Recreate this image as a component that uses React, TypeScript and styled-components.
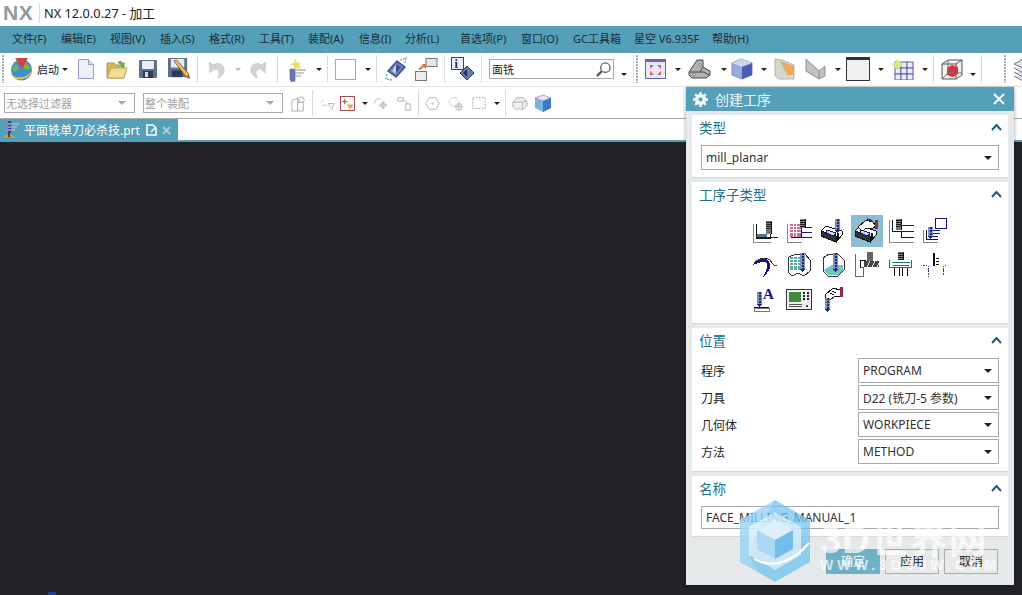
import styled, { createGlobalStyle } from "styled-components";
import type { ReactNode } from "react";

const FONT = `"Noto Sans", "Noto Sans CJK SC", sans-serif`;
const TEAL = "#559fb8";

const Global = createGlobalStyle`
  html, body { margin: 0; padding: 0; background: #212326; }
  body { font-family: ${FONT}; color: #222; }
  * { box-sizing: border-box; }
`;

const Page = styled.div`
  position: relative;
  display: flex;
  flex-direction: column;
  width: 1022px;
  height: 595px;
  overflow: hidden;
  background: #212326;
`;

const TitleBar = styled.div`
  display: flex;
  align-items: center;
  height: 26px;
  background: #fff;
`;

const Logo = styled.span`
  width: 39px;
  padding-left: 3px;
  font: bold 21px/26px "Liberation Sans", sans-serif;
  color: #8f9aa5;
  letter-spacing: 0.5px;
`;

const TitleText = styled.span`
  padding-left: 4px;
  font-size: 12.8px;
  line-height: 20px;
  border-left: 1px solid #d8d8d8;
  color: #222;
`;

const MenuBar = styled.div`
  display: flex;
  align-items: center;
  height: 27px;
  padding: 0 0 3px 12px;
  background: ${TEAL};
`;

const MenuItem = styled.span<{ $w: number }>`
  width: ${(p) => p.$w}px;
  font-size: 11px;
  white-space: nowrap;
  color: #1c2b33;
`;

const Toolbar = styled.div<{ $first?: boolean }>`
  display: flex;
  align-items: center;
  flex-shrink: 0;
  height: ${(p) => (p.$first ? 34 : 31)}px;
  padding: ${(p) => (p.$first ? "0 0 1px" : "1px 0 0")};
  background: #fff;
  border-bottom: ${(p) => (p.$first ? "1px solid #e2e2e2" : "0")};
  overflow: hidden;
`;

const Grip = styled.span<{ $ml: number }>`
  flex-shrink: 0;
  align-self: stretch;
  width: 2px;
  margin: 2px 0 2px ${(p) => p.$ml}px;
  background: repeating-linear-gradient(#aaa 0 2px, transparent 2px 3px);
`;

const Sep = styled.span<{ $ml: number }>`
  flex-shrink: 0;
  align-self: stretch;
  width: 1px;
  margin: 2px 0 2px ${(p) => p.$ml}px;
  background: #dcdcdc;
`;

const Caret = styled.span<{ $ml: number; $low?: boolean; $dim?: boolean }>`
  flex-shrink: 0;
  width: 0;
  height: 0;
  margin-left: ${(p) => p.$ml}px;
  margin-top: ${(p) => (p.$low ? 10 : 0)}px;
  border-left: 3px solid transparent;
  border-right: 3px solid transparent;
  border-top: 3px solid ${(p) => (p.$dim ? "#bbb" : "#222")};
`;

const Slot = styled.span<{ $ml: number; $w: number }>`
  display: flex;
  flex-shrink: 0;
  width: ${(p) => p.$w}px;
  margin-left: ${(p) => p.$ml}px;
  svg { display: block; width: 100%; height: auto; }
`;

const StartLabel = styled.span`
  flex-shrink: 0;
  width: 25px;
  margin-left: 4px;
  font-size: 11px;
`;

const Blank = styled.span<{ $ml: number }>`
  flex-shrink: 0;
  width: 21px;
  height: 21px;
  margin-left: ${(p) => p.$ml}px;
  border: 1px solid #a8a8a8;
  background: #fff;
`;

const SearchBox = styled.div<{ $ml: number }>`
  display: flex;
  align-items: center;
  justify-content: space-between;
  flex-shrink: 0;
  width: 125px;
  height: 20px;
  margin-left: ${(p) => p.$ml}px;
  padding: 0 2px;
  border: 1px solid #a8a8a8;
  font-size: 11px;
`;

const Filter = styled.div<{ $ml: number; $w: number }>`
  display: flex;
  align-items: center;
  justify-content: space-between;
  flex-shrink: 0;
  width: ${(p) => p.$w}px;
  height: 20px;
  margin-left: ${(p) => p.$ml}px;
  padding: 0 8px 0 1px;
  border: 1px solid #aaa;
  font-size: 11px;
  color: #a0a0a0;
`;

const FilterCaret = styled.span`
  width: 0;
  height: 0;
  border-left: 4px solid transparent;
  border-right: 4px solid transparent;
  border-top: 4px solid #a8a8a8;
`;

const TabRow = styled.div`
  display: flex;
  flex-shrink: 0;
  height: 24px;
  background: #fff;
  border-top: 1px solid #a9a9a9;
  border-bottom: 2px solid ${TEAL};
`;

const Tab = styled.div`
  display: flex;
  align-items: center;
  width: 178px;
  height: 22px;
  padding-left: 4px;
  background: ${TEAL};
  color: #fff;
  font-size: 12px;
`;

const TabName = styled.span`
  margin-left: 4px;
  white-space: nowrap;
`;

const Workspace = styled.div`
  flex: 1;
  background: #212326;
`;

const Dialog = styled.div`
  position: absolute;
  left: 686px;
  top: 87px;
  display: flex;
  flex-direction: column;
  width: 328px;
  height: 498px;
  background: #e6e9ea;
  box-shadow: 0 1px 4px rgba(0, 0, 0, 0.4);
`;

const DialogHeader = styled.div`
  display: flex;
  align-items: center;
  flex-shrink: 0;
  height: 24px;
  padding: 0 9px 0 7px;
  background: ${TEAL};
  color: #f2f8fa;
  font-size: 14px;
`;

const DialogTitle = styled.span`
  flex: 1;
  margin-left: 7px;
`;

const DialogBody = styled.div`
  display: flex;
  flex-direction: column;
  gap: 4px;
  padding: 4px 6px 0;
`;

const Panel = styled.section<{ $h: number }>`
  height: ${(p) => p.$h}px;
  padding: 0 9px;
  background: #fff;
  border-bottom: 1px solid #d4d6d7;
`;

const PanelHead = styled.div`
  display: flex;
  align-items: center;
  justify-content: space-between;
  height: 26px;
  margin: 0 -3px 4px -2px;
  padding-bottom: 2px;
  font-size: 13.5px;
  color: #23708a;
`;

const Select = styled.div<{ $w?: number }>`
  display: flex;
  align-items: center;
  justify-content: space-between;
  width: ${(p) => (p.$w ? `${p.$w}px` : "100%")};
  height: 25px;
  padding: 0 6px 0 4px;
  border: 1px solid #a8a8a8;
  font-size: 12px;
  color: #333;
  background: #fff;
`;

const SelectCaret = styled.span`
  width: 0;
  height: 0;
  border-left: 4px solid transparent;
  border-right: 4px solid transparent;
  border-top: 4px solid #222;
`;

const OpGrid = styled.div`
  display: grid;
  grid-template-columns: repeat(6, 32px);
  grid-auto-rows: 32px;
  gap: 2px;
  margin: 7px 0 0 48px;
`;

const OpCell = styled.div<{ $active?: boolean }>`
  display: flex;
  align-items: center;
  justify-content: center;
  background: ${(p) => (p.$active ? "#8dbdd0" : "transparent")};
  svg { display: block; width: 26px; height: 26px; shape-rendering: crispEdges; }
`;

const FieldList = styled.div`
  display: flex;
  flex-direction: column;
  gap: 2px;
`;

const FieldRow = styled.div`
  display: flex;
  align-items: center;
  justify-content: space-between;
  font-size: 12px;
  color: #222;
`;

const NameInput = styled.div`
  height: 23px;
  padding-left: 4px;
  border: 1px solid #a8a8a8;
  font-size: 12px;
  line-height: 21px;
  color: #333;
`;

const Footer = styled.div`
  display: flex;
  justify-content: flex-end;
  gap: 5px;
  padding: 12px 16px 0 0;
`;

const Btn = styled.div<{ $primary?: boolean }>`
  width: 54px;
  height: 25px;
  font-size: 12px;
  line-height: 23px;
  text-align: center;
  border: 1px solid ${(p) => (p.$primary ? "#6fb0c8" : "#acacac")};
  background: ${(p) => (p.$primary ? "#6fb0c8" : "#e8e9e9")};
  color: ${(p) => (p.$primary ? "#fff" : "#222")};
`;

const Watermark = styled.div`
  position: absolute;
  left: 738px;
  top: 499px;
  display: flex;
  pointer-events: none;
`;

const MarkText = styled.div`
  display: flex;
  flex-direction: column;
  margin: 26px 0 0 8px;
  white-space: nowrap;
  color: #fff;
  opacity: 0.7;
`;

const MarkTitle = styled.span`
  font: bold 38px/30px "Liberation Sans", "Noto Sans CJK SC", sans-serif;
  letter-spacing: 1px;
`;

const MarkUrl = styled.span`
  margin-top: 1px;
  font: bold 14px/18px "Liberation Sans", sans-serif;
  letter-spacing: 4.1px;
`;

const Speck = styled.span`
  position: absolute;
  left: 48px;
  bottom: 0;
  width: 8px;
  height: 3px;
  background: #2a45b8;
  opacity: 0.75;
`;

const S = ({ w, h, children }: { w: number; h: number; children: ReactNode }) => (
  <svg viewBox={`0 0 ${w} ${h}`} xmlns="http://www.w3.org/2000/svg">{children}</svg>
);

const Globe = () => (
  <S w={23} h={25}>
    <circle cx="11.5" cy="13" r="10.5" fill="#3f8fd0" />
    <path d="M3 9c4-3 6 0 5 3s-4 3-5 1zM12 6c4-1 7 2 9 6-3 2-7 0-8-2z" fill="#7db04a" />
    <path d="M1 17c5 5 15 5 22-4-3 10-18 13-22 4z" fill="#e3c23c" />
    <path d="M5 1h13l-6 11z" fill="#c9473f" />
  </S>
);
const Doc = () => (
  <S w={16} h={20}>
    <path d="M.5.5h10l5 5v14H.5z" fill="#eeeefa" stroke="#9a9ad0" />
    <path d="M10.5.5v5h5" fill="#dcdcf2" stroke="#9a9ad0" />
  </S>
);
const Folder = () => (
  <S w={22} h={21}>
    <path d="M1 4h7l2 2h8v13H1z" fill="#d9b85a" stroke="#b0924a" />
    <path d="M1 19l4-10h16l-3 10z" fill="#f3dd93" stroke="#bfa45a" />
    <path d="M11 4c3-3 5-2 6 0l2-1-1 6-5-2 2-1c-1-1-2-2-4-2z" fill="#6cab4a" />
  </S>
);
const Floppy = () => (
  <S w={18} h={18}>
    <rect width="18" height="18" rx="1" fill="#5d6f8e" />
    <rect x="3" y="1" width="12" height="8" fill="#e9edf3" />
    <rect x="4" y="11" width="10" height="7" fill="#2f3b50" />
    <rect x="6" y="12" width="3" height="5" fill="#cfd6e0" />
  </S>
);
const SaveAs = () => (
  <S w={23} h={23}>
    <rect width="20" height="20" fill="#5d6f8e" />
    <rect x="3" y="1" width="14" height="9" fill="#e9edf3" />
    <rect x="4" y="13" width="11" height="7" fill="#2f3b50" />
    <path d="M6 3l3-1 13 15-3 3z" fill="#e7c13f" stroke="#333" strokeWidth=".6" />
    <path d="M19 20l3-3 1 5z" fill="#d23f3f" />
  </S>
);
const Undo = ({ flip }: { flip?: boolean }) => (
  <S w={18} h={20}>
    <g transform={flip ? "matrix(-1 0 0 1 18 0)" : undefined}>
      <path d="M2 4l1 10 3-3c4-2 6 0 6 3 0 2-1 4-2 5 5-1 8-5 7-10-1-4-6-6-11-3L3 3z" fill="#d2d3d4" stroke="#bcbcbc" strokeWidth=".5" />
    </g>
  </S>
);
const Wand = () => (
  <S w={20} h={25}>
    <path d="M3 12h5v12l-3 1-2-2z" fill="#6b78b8" stroke="#44508f" strokeWidth=".5" />
    <path d="M8 13h11M8 16h9M8 19h6" stroke="#8a8f9e" />
    <path d="M8 1l2 5 4-1-2 4 3 3-5-1-3 2 0-4-4-2 4-1z" fill="#e8e06a" />
  </S>
);
const Rotate3D = () => (
  <S w={24} h={24}>
    <path d="M13 4l8 6-9 10-8-6z" fill="#6d7db8" stroke="#3f4e93" strokeWidth="1.4" />
    <path d="M12 7l5 3-5 7-4-3z" fill="#c4d2ee" />
    <path d="M12 7l5 3-5 7z" fill="#3f4e93" />
    <path d="M16 3l6-2-1 5M8 23l-6-1 1-6" stroke="#7aa0c8" strokeWidth="1.3" strokeDasharray="2 1" fill="none" />
  </S>
);
const TwoSquares = () => (
  <S w={23} h={23}>
    <rect x="11" y=".5" width="11" height="8" fill="#e6e6e6" stroke="#777" />
    <rect x=".5" y="13.5" width="11" height="9" fill="#ececec" stroke="#777" />
    <path d="M3 11l5-4-2-1h5v5l-2-2-4 3z" fill="#d9782f" />
  </S>
);
const InfoIcon = () => (
  <S w={24} h={24}>
    <rect x=".5" y=".5" width="12" height="12" fill="#eceefa" stroke="#3d3d86" />
    <text x="3.5" y="10.5" fontFamily="Liberation Serif" fontWeight="700" fontSize="12" fill="#23235e">i</text>
    <path d="M16 9l7 7-7 7-7-7z" fill="#6c7ca8" stroke="#2a3467" />
    <path d="M16 12v8l-4-4z" fill="#27315f" />
  </S>
);
const Magnifier = () => (
  <S w={16} h={16}>
    <circle cx="10" cy="6" r="5" fill="#fff" stroke="#555" strokeWidth="1.3" />
    <path d="M6 10l-5 5" stroke="#555" strokeWidth="2.4" />
  </S>
);
const ZoomFit = () => (
  <S w={21} h={20}>
    <rect width="21" height="20" fill="#5b68b5" />
    <rect x="1" y="3" width="19" height="16" fill="#e7e8fa" />
    <path d="M5 6h4l-4 4zM16 6v4l-4-4zM5 16v-4l4 4zM16 16h-4l4-4z" fill="#d0694f" />
  </S>
);
const Bracket = () => (
  <S w={23} h={20}>
    <path d="M1 13L9 1h6v7l7 4v4l-4 3H4l-3-3z" fill="#b1b3b3" stroke="#444" />
    <path d="M2 13h14l5 3M15 8l-3 5" stroke="#444" fill="none" />
    <circle cx="6" cy="15.5" r="1.2" fill="#fff" stroke="#333" strokeWidth=".5" />
    <circle cx="12" cy="6" r="1.2" fill="#fff" stroke="#333" strokeWidth=".5" />
  </S>
);
const BlueBox = () => (
  <S w={22} h={22}>
    <path d="M1 5l9-4 11 4v12l-10 4-10-4z" fill="#95a9dc" stroke="#7a8ccc" />
    <path d="M1 5l10 4 10-4-11-4z" fill="#c9d6f2" />
    <path d="M11 9l10-4v12l-10 4z" fill="#4c5eaf" />
  </S>
);
const OrangeSheet = () => (
  <S w={21} h={22}>
    <path d="M1 1l7 1 12 5v14H5L1 18z" fill="#d5d5d2" stroke="#b5b5b0" />
    <path d="M6 3l14 5v9h-7z" fill="#e9ab62" />
  </S>
);
const GraySheet = () => (
  <S w={21} h={22}>
    <path d="M1 1l13 12 6-5v10l-6 3-13-8z" fill="#c0c1c1" stroke="#8f8f8f" />
    <path d="M14 13v8" stroke="#8f8f8f" />
  </S>
);
const WindowIcon = () => (
  <S w={24} h={24}>
    <rect x=".5" y=".5" width="23" height="23" fill="#efefef" stroke="#333" />
    <rect width="24" height="3" fill="#333" />
  </S>
);
const GridStar = () => (
  <S w={23} h={21}>
    <g fill="#eeeefb" stroke="#5e5ea8">
      <rect x="4" y="3" width="6" height="6" />
      <rect x="10" y="3" width="6" height="6" />
      <rect x="16" y="3" width="6" height="6" />
      <rect x="4" y="9" width="6" height="6" />
      <rect x="10" y="9" width="6" height="6" />
      <rect x="16" y="9" width="6" height="6" />
      <rect x="4" y="15" width="6" height="6" />
      <rect x="10" y="15" width="6" height="6" />
      <rect x="16" y="15" width="6" height="6" />
    </g>
    <path d="M6 0l2 3 3-1-1 3 3 2-4 1-1 4-2-3-4 1 2-3-4-2 4-1z" fill="#dfe47c" />
  </S>
);
const RedCube = () => (
  <S w={22} h={21}>
    <path d="M1 5L7 1h14v15l-6 4H1zM1 5h14v15M15 5l6-4" fill="#f0f0f0" stroke="#555" />
    <path d="M6 9l5-3 6 2v7l-5 3-6-2z" fill="#d8333f" />
    <path d="M1 20l6-6M7 1v13h14" stroke="#777" fill="none" />
  </S>
);
const Layers = () => (
  <S w={14} h={24}>
    <path d="M1 7l9-5 8 5-8 4zM1 11l9 5 8-5M1 15l9 5 8-5M1 19l9 5 8-5" fill="#dfe2ee" stroke="#777" />
  </S>
);

const Dim = ({ children }: { children: ReactNode }) => (
  <S w={18} h={18}><g fill="none" stroke="#adadad" strokeWidth="1">{children}</g></S>
);

const SelFilter = () => (
  <S w={16} h={16}>
    <rect x=".5" y=".5" width="15" height="15" fill="#fff" stroke="#a33d4f" />
    <path d="M5 3v6M2 6h6" stroke="#a0453a" />
    <path d="M7 9h7l-3 5z" fill="#e2a53c" />
  </S>
);

const TabFile = () => (
  <S w={11} h={12}>
    <path d="M1 1h6l3 3v7H1z" fill="none" stroke="#fff" strokeWidth="1.6" />
    <path d="M5 8l4-4" stroke="#fff" strokeWidth="1.5" />
  </S>
);

const TabDrill = () => (
  <S w={16} h={18}>
    <path d="M4 0h3v12H4z" fill="#3a3a9a" />
    <path d="M4 3h3M4 6h3M4 9h3" stroke="#e8e8f0" />
    <path d="M8 3h7M8 6h5M8 9h3" stroke="#c8d7df" />
    <path d="M0 16c4-2 7-2 10 0" stroke="#d0a63a" strokeWidth="2" fill="none" />
    <path d="M5 12v4" stroke="#7c2d3a" strokeWidth="2" />
  </S>
);

const Gear = () => (
  <svg width="15" height="15" viewBox="0 0 14 14">
    <circle cx="7" cy="7" r="3.6" fill="none" stroke="#f2f8fa" strokeWidth="3.4" />
    <path d="M7 0v3M7 11v3M0 7h3M11 7h3M2 2l2 2M10 10l2 2M12 2l-2 2M4 10l-2 2" stroke="#f2f8fa" strokeWidth="2.2" />
  </svg>
);

const CloseX = () => (
  <svg width="12" height="12" viewBox="0 0 12 12">
    <path d="M1 1l10 10M11 1L1 11" stroke="#fff" strokeWidth="1.8" />
  </svg>
);

const Chevron = () => (
  <svg width="11" height="8" viewBox="0 0 11 8">
    <path d="M1 7l4.5-5L10 7" fill="none" stroke="#1d5f78" strokeWidth="2" />
  </svg>
);

const NAVY = "#14148c";

const Spindle = ({ x, y, h = 10 }: { x: number; y: number; h?: number }) => (
  <g>
    <rect x={x} y={y} width="6" height={h} fill="#77797c" />
    <path d={`M${x} ${y + 1.5}h6M${x} ${y + 3.5}h6M${x} ${y + 5.5}h6M${x} ${y + 7.5}h6`} stroke="#222" />
    <path d={`M${x + 5.5} ${y}v${h}`} stroke="#111" />
  </g>
);

const BlueSpindle = ({ x, y, h = 12 }: { x: number; y: number; h?: number }) => (
  <g>
    <rect x={x} y={y} width="5" height={h} fill="#7d8fb8" />
    <path d={`M${x + 2.5} ${y}v${h}`} stroke="#1b2a7a" strokeWidth="2" strokeDasharray="2 1" />
    <path d={`M${x} ${y + h}l2.5 3 2.5-3`} fill="#1b2a7a" />
  </g>
);

const Box3D = () => (
  <g>
    <path d="M1 13l5-5 16 5v4l-6 7L1 18z" fill="#fff" stroke="#111" />
    <path d="M1 13l15 5v6L1 18z" fill="#333" stroke="#111" />
    <path d="M7 12l9 3-2 3-8-3z" fill="#cfd8ef" stroke={NAVY} />
    <path d="M18 15v7" stroke="#111" strokeWidth="2" />
  </g>
);

const opIcons: ReactNode[] = [
  <S w={26} h={26} key="0"><path d="M1.5 6v18h17" fill="none" stroke="#888" /><path d="M4.5 6v14.5h14V6" fill="none" stroke="#111" strokeWidth="1.5" /><rect x="5" y="16" width="10" height="3" fill="#4c7a8c" /><path d="M4 19.5h22" stroke={NAVY} strokeWidth="1.4" /><Spindle x={14} y={3} h={13} /></S>,
  <S w={26} h={26} key="1"><path d="M1.5 6v18h14" fill="none" stroke="#888" /><path d="M4 6h11v13H4z" fill="#cf6f98" /><path d="M4 8.5h11M4 11.5h11M4 14.5h11M7.5 6v13M10.5 6v13" stroke="#fff" /><path d="M4.5 19.5h11V10" fill="none" stroke="#111" /><path d="M15 9.5h11M15 14.5h11M15 19.5h11" stroke={NAVY} /><Spindle x={14} y={1} h={9} /></S>,
  <S w={26} h={26} key="2"><Box3D /><BlueSpindle x={15} y={1} h={11} /></S>,
  <S w={26} h={26} key="3"><Box3D /><path d="M4 9l8-7 7 2 3 4-4 3-5-1-5 3z" fill="#fff" stroke="#111" /><rect x="21" y="2" width="3" height="9" fill="#8c2a50" /><path d="M13 1l5 2" stroke="#333" strokeWidth="2" /></S>,
  <S w={26} h={26} key="4"><path d="M1.5 2v22h24" fill="none" stroke="#888" /><path d="M4.5 2v11.5h9v6h12" fill="none" stroke="#111" /><path d="M13 7.5h13M13 13.5h13" stroke={NAVY} /><Spindle x={8} y={1} h={11} /></S>,
  <S w={26} h={26} key="5"><path d="M1.5 12v12h14" fill="none" stroke="#888" /><path d="M4.5 12v9.5h11" fill="none" stroke="#111" /><path d="M11 12.5h7M11 15.5h7M11 18.5h5" stroke={NAVY} /><BlueSpindle x={6} y={9} h={9} /><rect x="13.5" y=".5" width="11" height="10" fill="#fff" stroke={NAVY} /></S>,
  <S w={26} h={26} key="6"><path d="M2 11c7-6 12-6 16-3 2 3 3 6 7 6" fill="none" stroke="#333" /><path d="M1 12c6-6 12-6 15-4 4 5 2 12-5 17 4-7 6-13 2-15-3-1-6 1-12 3z" fill={NAVY} /></S>,
  <S w={26} h={26} key="7"><path d="M3 5l7-3h9l5 6v11l-6 5-6-3-6 3-4-4V8z" fill="#fff" stroke="#333" /><path d="M4 5h15v13H4z" fill="#5cae9f" /><path d="M4 7.5h15M4 10.5h15M4 13.5h15M7.5 5v13M11.5 5v13M15.5 5v13" stroke="#fff" /><BlueSpindle x={14} y={1} h={16} /></S>,
  <S w={26} h={26} key="8"><path d="M3 6l6-4h9l6 6v10l-6 6H8l-5-5z" fill="#fff" stroke="#333" /><path d="M4 18l8-5h11v6l-5 4H8z" fill="#74c3bf" /><BlueSpindle x={13} y={1} h={16} /></S>,
  <S w={26} h={26} key="9"><path d="M1.5 2v22h8V15.5h-3V8h5" fill="none" stroke="#666" /><path d="M6.5 16V8.5h5" fill="none" stroke="#111" /><rect x="10" y="9" width="15" height="6" fill="#444" /><path d="M13 15l3-6M18 15l3-6M23 15l2-4" stroke="#ddd" /><rect x="13" y="0" width="6" height="9" fill="#666" /></S>,
  <S w={26} h={26} key="10"><path d="M1.5 8v7.5h22V8" fill="none" stroke="#18718c" /><path d="M4 10.5h18M5 13h16" stroke="#18718c" /><path d="M6.5 16v8M11.5 16v8M14.5 16v8M19.5 16v8" stroke="#111" /><Spindle x={10} y={0} h={8} /></S>,
  <S w={26} h={26} key="11"><rect x="11" y="1" width="2" height="13" fill="#111" /><path d="M14 6.5h3M14 9.5h3M14 12.5h3" stroke="#111" /><path d="M1 13.5h5v11M24 13l-3 2v9M7 16l-1 2 1 2M21 16l1 2-1 2" fill="none" stroke="#294d6b" strokeDasharray="1.5 1" /></S>,
  <S w={26} h={26} key="12"><path d="M2 21.5h15" stroke="#111" /><rect x="2" y="22" width="15" height="3" fill="#fff" stroke="#777" /><BlueSpindle x={5} y={6} h={12} /><text x="11" y="13" fontFamily="Liberation Serif" fontWeight="700" fontSize="15" fill={NAVY}>A</text></S>,
  <S w={26} h={26} key="13"><rect x=".5" y="3.5" width="25" height="20" fill="#efefef" stroke="#333" /><rect x="3" y="6" width="12" height="10" fill="#3d8a3d" /><path d="M17 7h2M21 7h2M17 10h2M21 10h2M17 13h2M21 13h2" stroke="#222" strokeWidth="1.5" /><path d="M3 18.5h13M3 20.5h13" stroke="#555" /><circle cx="21" cy="20" r="1.6" fill="#a52a2a" /></S>,
  <S w={26} h={26} key="14"><path d="M5 9l8-7 7 2v6l-6 1-3 2H6z" fill="#fff" stroke="#111" /><path d="M10 7l4 2M12 5l4 2" stroke="#111" /><rect x="20" y="1" width="3" height="10" fill="#8c2a50" /><BlueSpindle x={5} y={12} h={11} /></S>,
];

const menus: [string, number][] = [
  ["文件(F)", 49], ["编辑(E)", 49], ["视图(V)", 50], ["插入(S)", 49], ["格式(R)", 50],
  ["工具(T)", 49], ["装配(A)", 51], ["信息(I)", 46], ["分析(L)", 55], ["首选项(P)", 61],
  ["窗口(O)", 52], ["GC工具箱", 61], ["星空 V6.935F", 78], ["帮助(H)", 50],
];

const fields: [string, string][] = [
  ["程序", "PROGRAM"],
  ["刀具", "D22 (铣刀-5 参数)"],
  ["几何体", "WORKPIECE"],
  ["方法", "METHOD"],
];

export default function App() {
  return (
    <Page>
      <Global />
      <TitleBar>
        <Logo>NX</Logo>
        <TitleText>NX 12.0.0.27 - 加工</TitleText>
      </TitleBar>
      <MenuBar>
        {menus.map(([label, w]) => (
          <MenuItem key={label} $w={w}>{label}</MenuItem>
        ))}
      </MenuBar>
      <Toolbar $first>
        <Grip $ml={2} />
        <Slot $ml={6} $w={23}><Globe /></Slot>
        <StartLabel>启动</StartLabel>
        <Caret $ml={0} />
        <Slot $ml={10} $w={16}><Doc /></Slot>
        <Slot $ml={12} $w={22}><Folder /></Slot>
        <Slot $ml={11} $w={18}><Floppy /></Slot>
        <Slot $ml={11} $w={22}><SaveAs /></Slot>
        <Sep $ml={7} />
        <Slot $ml={9} $w={18}><Undo /></Slot>
        <Caret $ml={10} $dim />
        <Slot $ml={9} $w={18}><Undo flip /></Slot>
        <Sep $ml={9} />
        <Slot $ml={9} $w={20}><Wand /></Slot>
        <Caret $ml={9} />
        <Sep $ml={5} />
        <Blank $ml={7} />
        <Caret $ml={9} />
        <Sep $ml={5} />
        <Slot $ml={7} $w={24}><Rotate3D /></Slot>
        <Slot $ml={7} $w={23}><TwoSquares /></Slot>
        <Sep $ml={6} />
        <Slot $ml={6} $w={24}><InfoIcon /></Slot>
        <Sep $ml={6} />
        <SearchBox $ml={7}>
          面铣
          <Slot $ml={0} $w={15}><Magnifier /></Slot>
        </SearchBox>
        <Caret $ml={7} $low />
        <Sep $ml={6} />
        <Grip $ml={2} />
        <Slot $ml={7} $w={21}><ZoomFit /></Slot>
        <Caret $ml={9} />
        <Slot $ml={7} $w={23}><Bracket /></Slot>
        <Caret $ml={10} />
        <Slot $ml={4} $w={22}><BlueBox /></Slot>
        <Caret $ml={8} />
        <Slot $ml={7} $w={21}><OrangeSheet /></Slot>
        <Slot $ml={10} $w={21}><GraySheet /></Slot>
        <Caret $ml={9} />
        <Slot $ml={5} $w={24}><WindowIcon /></Slot>
        <Caret $ml={8} />
        <Slot $ml={7} $w={23}><GridStar /></Slot>
        <Caret $ml={8} />
        <Sep $ml={5} />
        <Slot $ml={7} $w={22}><RedCube /></Slot>
        <Caret $ml={7} $low />
        <Sep $ml={5} />
        <Grip $ml={22} />
        <Slot $ml={7} $w={14}><Layers /></Slot>
      </Toolbar>
      <Toolbar>
        <Filter $ml={4} $w={131}>无选择过滤器<FilterCaret /></Filter>
        <Filter $ml={8} $w={140}>整个装配<FilterCaret /></Filter>
        <Slot $ml={7} $w={17}><Dim><path d="M2 6l6-3v14H2zM8 8h6v9H8z" /><circle cx="12" cy="5" r="3" /></Dim></Slot>
        <Sep $ml={5} />
        <Slot $ml={7} $w={15}><Dim><path d="M1 8l3-3M3 11h5M10 9h7l-3 7z" /></Dim></Slot>
        <Slot $ml={5} $w={15}><SelFilter /></Slot>
        <Caret $ml={7} />
        <Slot $ml={5} $w={15}><Dim><path d="M2 9c0-5 4-7 7-5M12 6v10M7 11h10" /><circle cx="12" cy="11" r="3" /></Dim></Slot>
        <Slot $ml={8} $w={16}><Dim><path d="M2 3h6v4H2zM8 5l5 5M11 10h5v7h-5z" /></Dim></Slot>
        <Sep $ml={6} />
        <Slot $ml={6} $w={15}><Dim><path d="M5 2h8l4 7-4 7H5L1 9z" /><circle cx="9" cy="9" r="1" /></Dim></Slot>
        <Slot $ml={8} $w={15}><Dim><path d="M4 2h6l4 6-2 4H4L1 7z" strokeDasharray="1.5 1" /><circle cx="13" cy="13" r="4" /><path d="M9 13h8M13 9v8" /></Dim></Slot>
        <Slot $ml={8} $w={16}><Dim><rect x="2" y="3" width="14" height="12" strokeDasharray="2 1.5" stroke="#999" /></Dim></Slot>
        <Caret $ml={7} />
        <Sep $ml={5} />
        <Slot $ml={6} $w={16}><Dim><path d="M1 8l5-5h7l4 5v4l-4 4H4l-3-3z" fill="#eee" /><path d="M1 8h11l5-1M12 8v8" /></Dim></Slot>
        <Slot $ml={6} $w={18}><S w={18} h={18}><path d="M1 4l8-3 8 3v10l-8 4-8-4z" fill="#79b4e6" /><path d="M1 4l8 3 8-3-8-3z" fill="#dfeaf6" stroke="#b85a5a" strokeWidth=".5" /><path d="M9 7l8-3v10l-8 4z" fill="#3d78c4" /></S></Slot>
      </Toolbar>
      <TabRow>
        <Tab>
          <Slot $ml={0} $w={16}><TabDrill /></Slot>
          <TabName>平面铣单刀必杀技.prt</TabName>
          <Slot $ml={6} $w={11}><TabFile /></Slot>
          <Slot $ml={5} $w={9}><S w={9} h={9}><path d="M1 1l7 7M8 1L1 8" stroke="#a9cfdc" strokeWidth="2" /></S></Slot>
        </Tab>
      </TabRow>
      <Workspace />
      <Speck />
      <Dialog>
        <DialogHeader>
          <Gear />
          <DialogTitle>创建工序</DialogTitle>
          <CloseX />
        </DialogHeader>
        <DialogBody>
          <Panel $h={63}>
            <PanelHead>类型<Chevron /></PanelHead>
            <Select>mill_planar<SelectCaret /></Select>
          </Panel>
          <Panel $h={142}>
            <PanelHead>工序子类型<Chevron /></PanelHead>
            <OpGrid>
              {opIcons.map((icon, i) => (
                <OpCell key={i} $active={i === 3}>{icon}</OpCell>
              ))}
            </OpGrid>
          </Panel>
          <Panel $h={144}>
            <PanelHead>位置<Chevron /></PanelHead>
            <FieldList>
              {fields.map(([label, value]) => (
                <FieldRow key={label}>
                  {label}
                  <Select $w={141}>{value}<SelectCaret /></Select>
                </FieldRow>
              ))}
            </FieldList>
          </Panel>
          <Panel $h={61}>
            <PanelHead>名称<Chevron /></PanelHead>
            <NameInput>FACE_MILLING_MANUAL_1</NameInput>
          </Panel>
        </DialogBody>
        <Footer>
          <Btn $primary>确定</Btn>
          <Btn>应用</Btn>
          <Btn>取消</Btn>
        </Footer>
      </Dialog>
      <Watermark>
        <svg width="74" height="84" viewBox="0 0 74 84">
          <path d="M37 1l35 20v42L37 83 2 63V21z" fill="#6cc0f0" opacity=".72" />
          <path d="M37 1L2 21v42l20 11c-10-10-12-20-8-30z" fill="#fff" opacity=".22" />
          <path d="M37 13l26 15v28L37 71 11 56V28z" fill="#fff" opacity=".55" />
          <path d="M37 21l18 10-18 10-18-10z" fill="#dff0fb" opacity=".9" />
          <path d="M19 31l18 10v19L19 50z" fill="#a8d6f2" opacity=".9" />
          <path d="M55 31L37 41v19l18-10z" fill="#6cbbea" opacity=".95" />
          <path d="M16 60c18 10 38 4 55-16" fill="none" stroke="#fff" strokeWidth="2" />
        </svg>
        <MarkText>
          <MarkTitle>3D世界网</MarkTitle>
          <MarkUrl>WWW.3DSJW.COM</MarkUrl>
        </MarkText>
      </Watermark>
    </Page>
  );
}
